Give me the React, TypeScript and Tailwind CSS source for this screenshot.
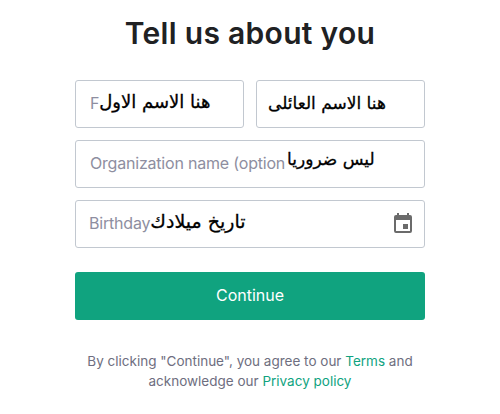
const FONT = "font-['Inter','Noto_Sans',sans-serif]";

function Field({
  placeholder,
  arabic,
  arabicClass,
  className = '',
  children,
}: {
  placeholder?: string;
  arabic: string;
  arabicClass: string;
  className?: string;
  children?: React.ReactNode;
}) {
  return (
    <div
      className={`relative flex h-12 items-center overflow-hidden rounded-[3px] border border-[#c2c8d0] bg-white ${className}`}
    >
      {placeholder && (
        <span className="whitespace-nowrap pb-[2px] text-base tracking-[-0.2px] text-[#8e8ea0]">
          {placeholder}
        </span>
      )}
      <span
        dir="rtl"
        className={`whitespace-nowrap font-['DejaVu_Sans',sans-serif] leading-6 text-black [-webkit-text-stroke:0.3px_black] ${arabicClass}`}
      >
        {arabic}
      </span>
      {children}
    </div>
  );
}

export default function App() {
  return (
    <div className={`flex h-[414px] w-[500px] flex-col items-center bg-white ${FONT}`}>
      <h1 className="mt-[13px] text-[30px] leading-10 font-semibold tracking-[0.3px] text-[#202123]">
        Tell us about you
      </h1>
      <form className="mt-[27px] flex w-[350px] flex-col gap-3">
        <div className="grid grid-cols-2 gap-3">
          <Field
            className="pl-[14px]"
            placeholder="F"
            arabic="هنا الاسم الاول"
            arabicClass="mb-[4px] text-lg"
          />
          <Field
            className="pl-[11px]"
            arabic="هنا الاسم العائلى"
            arabicClass="mb-[2px] text-[17px]"
          />
        </div>
        <Field
          className="pl-[14px]"
          placeholder="Organization name (option"
          arabic="ليس ضروريا"
          arabicClass="mb-[10px] ml-[2px] text-[17px]"
        />
        <Field
          className="pl-[13px]"
          placeholder="Birthday"
          arabic="تاريخ ميلادك"
          arabicClass="mb-[6px] text-[19px]"
        >
          <svg
            viewBox="0 0 24 24"
            className="absolute right-[9px] top-[11px] size-6 fill-[#6b6b6b]"
          >
            <path d="M19 3h-1V1h-2v2H8V1H6v2H5a2 2 0 0 0-2 2v14a2 2 0 0 0 2 2h14a2 2 0 0 0 2-2V5a2 2 0 0 0-2-2zm0 16H5V8h14v11zM12 12h5v5h-5z" />
          </svg>
        </Field>
        <button
          type="button"
          className="mt-3 h-12 rounded-[3px] bg-[#10a37f] pb-[2px] text-base text-white"
        >
          Continue
        </button>
      </form>
      <p className="mt-[31px] w-[350px] text-center text-[13.5px] leading-[20px] text-[#6e6e80]">
        By clicking "Continue", you agree to our <a className="text-[#10a37f]">Terms</a> and
        <br />
        acknowledge our <a className="text-[#10a37f]">Privacy policy</a>
      </p>
    </div>
  );
}
